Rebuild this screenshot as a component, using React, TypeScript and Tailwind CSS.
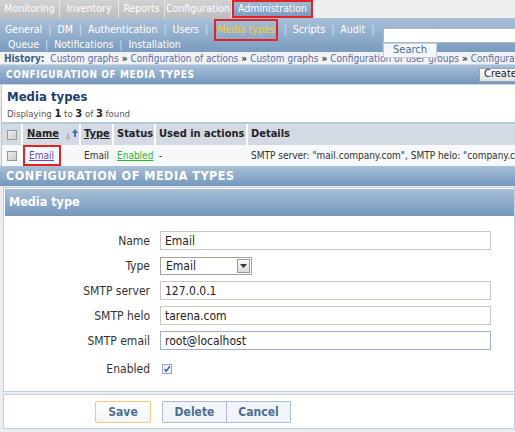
const font = { fontFamily: '"DejaVu Sans Condensed", "DejaVu Sans", sans-serif' };

const topMenu = [
  { name: "Monitoring", w: "w-[60px]" },
  { name: "Inventory", w: "w-[59px]" },
  { name: "Reports", w: "w-[46px]" },
  { name: "Configuration", w: "w-[67px]" },
];
const subMenu1 = ["General", "DM", "Authentication", "Users", "Media types", "Scripts", "Audit"];
const subMenu2 = ["Queue", "Notifications", "Installation"];
const history = [
  "Custom graphs",
  "Configuration of actions",
  "Custom graphs",
  "Configuration of user groups",
  "Configuration of user",
];

function Field({ label, children }: { label: string; children: React.ReactNode }) {
  return (
    <div className="flex h-[19px] items-center">
      <div className="w-[147px] shrink-0 pr-[1px] text-right text-[12px] text-[#333]">{label}</div>
      <div className="pl-[9px]">{children}</div>
    </div>
  );
}

function TextInput({ value, focus }: { value: string; focus?: boolean }) {
  return (
    <div
      className={
        focus
          ? "flex h-[19px] w-[331px] items-center border border-[#9db2d4] bg-white px-[4px] text-[12px] text-[#222]"
          : "flex h-[19px] w-[331px] items-center border border-[#cbc7bf] bg-white px-[4px] text-[12px] text-[#222]"
      }
    >
      {value}
    </div>
  );
}

function Check() {
  return <span className="h-[10px] w-[10px] border border-[#999] bg-gradient-to-br from-[#eee] to-[#ccc]" />;
}

export default function App() {
  return (
    <div className="relative h-[432px] w-[515px] overflow-hidden bg-[#e9edf1]" style={font}>
      {/* top menu */}
      <div className="flex h-[18px] text-[10.5px] text-white">
        {topMenu.map((m) => (
          <div
            key={m.name}
            className={`${m.w} flex shrink-0 items-center justify-center border-r border-[#e4e4e4] bg-gradient-to-b from-[#d2d2d2] to-[#bdbdbd]`}
          >
            {m.name}
          </div>
        ))}
        <div className="flex w-[81px] shrink-0 items-center justify-center border-2 border-[#e02424] bg-gradient-to-b from-[#9fb8d4] to-[#7c9cc0]">
          Administration
        </div>
        <div className="flex-1 bg-[#eeeeee]" />
      </div>

      {/* sub menu */}
      <div className="relative h-[34px] bg-gradient-to-b from-[#a9c0d8] to-[#7a9bbf] text-[10.5px] text-white">
        <div className="flex h-[22px] items-center pl-[5px] pt-[1px]">
          {subMenu1.map((m, i) => (
            <div key={m} className="flex items-center">
              {i > 0 && <span className="px-[6px] text-[#d4e0ec]">|</span>}
              {m === "Media types" ? (
                <span className="flex h-[22px] items-center border-2 border-[#e02424] px-[1px] text-[#ffcc22]">
                  {m}
                </span>
              ) : (
                <span>{m}</span>
              )}
            </div>
          ))}
          <span className="px-[6px] text-[#d4e0ec]">|</span>
        </div>
        <div className="flex h-[10px] items-center pl-[8px]">
          {subMenu2.map((m, i) => (
            <div key={m} className="flex items-center">
              {i > 0 && <span className="px-[6px] text-[#d4e0ec]">|</span>}
              <span>{m}</span>
            </div>
          ))}
        </div>
        <div className="absolute left-[383px] top-[10px] h-[15px] w-[140px] border border-[#b0b8c0] bg-white" />
        <div className="absolute left-[383px] top-[25px] z-10 flex h-[15px] w-[54px] items-center justify-center border border-[#c4ccd6] bg-[#f4f6f9] text-[11px] text-[#4d6c94]">
          Search
        </div>
      </div>

      {/* history */}
      <div className="flex h-[12px] items-center whitespace-nowrap bg-[#f0f2f4] pl-[4px] text-[10px] text-[#5b6aa6]">
        <span className="mr-[6px] font-bold text-[#3a5c88]">History:</span>
        {history.map((h, i) => (
          <span key={i} className="flex items-center">
            {i > 0 && <span className="px-[3px] font-bold text-[#333]">»</span>}
            {h}
          </span>
        ))}
      </div>

      {/* header bar */}
      <div className="flex h-[21px] items-center justify-between border-y border-[#c9d6e4] bg-gradient-to-b from-[#a9c0d8] to-[#7596bc] pl-[6px] text-[10px] font-bold tracking-[0.6px] text-white">
        <span>CONFIGURATION OF MEDIA TYPES</span>
        <span className="mr-[-8px] flex h-[14px] w-[44px] items-center border border-[#9aa4ae] bg-gradient-to-b from-white to-[#e2e2e2] pl-[4px] text-[11px] font-normal tracking-normal text-[#222]">
          Create
        </span>
      </div>

      {/* media types list */}
      <div className="ml-[1px] border-l border-[#b8c8d8] bg-white">
        <div className="flex h-[22px] items-center pl-[5px] pt-[2px] text-[13px] font-bold text-[#1e3d70]">Media types</div>
        <div className="flex h-[15px] items-center pl-[5px] text-[9.5px] text-[#555]">
          Displaying&nbsp;<b className="text-[11px] text-[#222]">1</b>&nbsp;to&nbsp;<b className="text-[11px] text-[#222]">3</b>
          &nbsp;of&nbsp;<b className="text-[11px] text-[#222]">3</b>&nbsp;found
        </div>
        <div className="flex h-[23px] gap-[2px] border-t-2 border-[#b6c8da] text-[11px] font-bold text-[#222]">
          <div className="flex w-[19px] shrink-0 items-center justify-center bg-[#d3dae3]">
            <Check />
          </div>
          <div className="flex w-[56px] shrink-0 items-center bg-[#d3dae3] pl-[4px]">
            <span className="underline">Name</span>
            <svg className="ml-[6px]" width="14" height="14" viewBox="0 0 14 14">
              <path d="M2 5h2v4h2l-3 4-3-4h2z" fill="#b4b9c0" />
              <path d="M10 1l3 4h-2v4H9V5H7z" fill="#3d72c4" />
            </svg>
          </div>
          <div className="flex w-[31px] shrink-0 items-center bg-[#d3dae3] pl-[3px] underline">Type</div>
          <div className="flex w-[40px] shrink-0 items-center bg-[#d3dae3] pl-[3px]">Status</div>
          <div className="flex w-[90px] shrink-0 items-center bg-[#d3dae3] pl-[3px]">Used in actions</div>
          <div className="flex min-w-0 flex-1 items-center bg-[#d3dae3] pl-[3px]">Details</div>
        </div>
        <div className="flex h-[21px] gap-[2px] whitespace-nowrap bg-[#f6f8fa] text-[10px] text-[#333]">
          <div className="flex w-[19px] shrink-0 items-center justify-center">
            <Check />
          </div>
          <div className="flex w-[56px] shrink-0 items-center">
            <span className="flex h-[21px] w-[38px] items-center border-2 border-[#e02424] pl-[4px] text-[#6c4cb4] underline">
              Email
            </span>
          </div>
          <div className="flex w-[31px] shrink-0 items-center pl-[3px]">Email</div>
          <div className="flex w-[40px] shrink-0 items-center pl-[3px] text-[#2cb82c] underline">Enabled</div>
          <div className="flex w-[90px] shrink-0 items-center pl-[3px]">-</div>
          <div className="flex min-w-0 flex-1 items-center pl-[3px]">
            SMTP server: "mail.company.com", SMTP helo: "company.com"
          </div>
        </div>
      </div>

      {/* second header */}
      <div className="flex h-[20px] items-center bg-gradient-to-b from-[#a9c0d8] to-[#7596bc] pl-[6px] text-[12.5px] font-bold tracking-[0.5px] text-white">
        CONFIGURATION OF MEDIA TYPES
      </div>

      {/* form */}
      <div className="ml-[3px] mt-[1px] h-[205px] border border-[#c2cfdc] bg-white">
        <div className="ml-[1px] mt-[1px] flex h-[27px] items-center bg-gradient-to-b from-[#a9c0d8] to-[#7596bc] pl-[4px] text-[12.5px] font-bold text-white">
          Media type
        </div>
        <div className="flex flex-col gap-[6px] pt-[15px]">
          <Field label="Name">
            <TextInput value="Email" />
          </Field>
          <Field label="Type">
            <div className="flex h-[18px] w-[92px] items-center justify-between border border-[#a6a29a] bg-white pl-[5px] pr-[1px] text-[12px] text-[#222]">
              Email
              <span className="flex h-[14px] w-[13px] items-center justify-center border border-[#999] bg-gradient-to-b from-[#fafafa] to-[#dcdcdc]">
                <svg width="7" height="4" viewBox="0 0 7 4">
                  <path d="M0 0h7L3.5 4z" fill="#333" />
                </svg>
              </span>
            </div>
          </Field>
          <Field label="SMTP server">
            <TextInput value="127.0.0.1" />
          </Field>
          <Field label="SMTP helo">
            <TextInput value="tarena.com" />
          </Field>
          <Field label="SMTP email">
            <TextInput value="root@localhost" focus />
          </Field>
          <div className="mt-[3px]">
            <Field label="Enabled">
              <span className="ml-[2px] flex h-[10px] w-[10px] items-center justify-center border border-[#9aa6b8] bg-[#eef2f8]">
                <svg width="8" height="8" viewBox="0 0 8 8">
                  <path d="M1.5 4.2l1.8 2L6.8 1.2" fill="none" stroke="#2a50a8" strokeWidth="1.3" />
                </svg>
              </span>
            </Field>
          </div>
        </div>
      </div>

      {/* buttons */}
      <div className="ml-[3px] mt-[2px] flex h-[35px] items-center border border-[#c2cfdc] bg-white pl-[91px] text-[12px] font-bold text-[#4d6c94]">
        <span className="flex h-[22px] w-[56px] items-center justify-center rounded-[2px] border border-[#f7c77e] bg-gradient-to-b from-white to-[#f2f4f7]">
          Save
        </span>
        <span className="ml-[11px] flex h-[22px] w-[65px] items-center justify-center rounded-l-[2px] border border-[#a9bdd5] bg-[#f1f4f8]">
          Delete
        </span>
        <span className="flex h-[22px] w-[64px] items-center justify-center rounded-r-[2px] border border-l-0 border-[#a9bdd5] bg-[#f1f4f8]">
          Cancel
        </span>
      </div>
    </div>
  );
}
